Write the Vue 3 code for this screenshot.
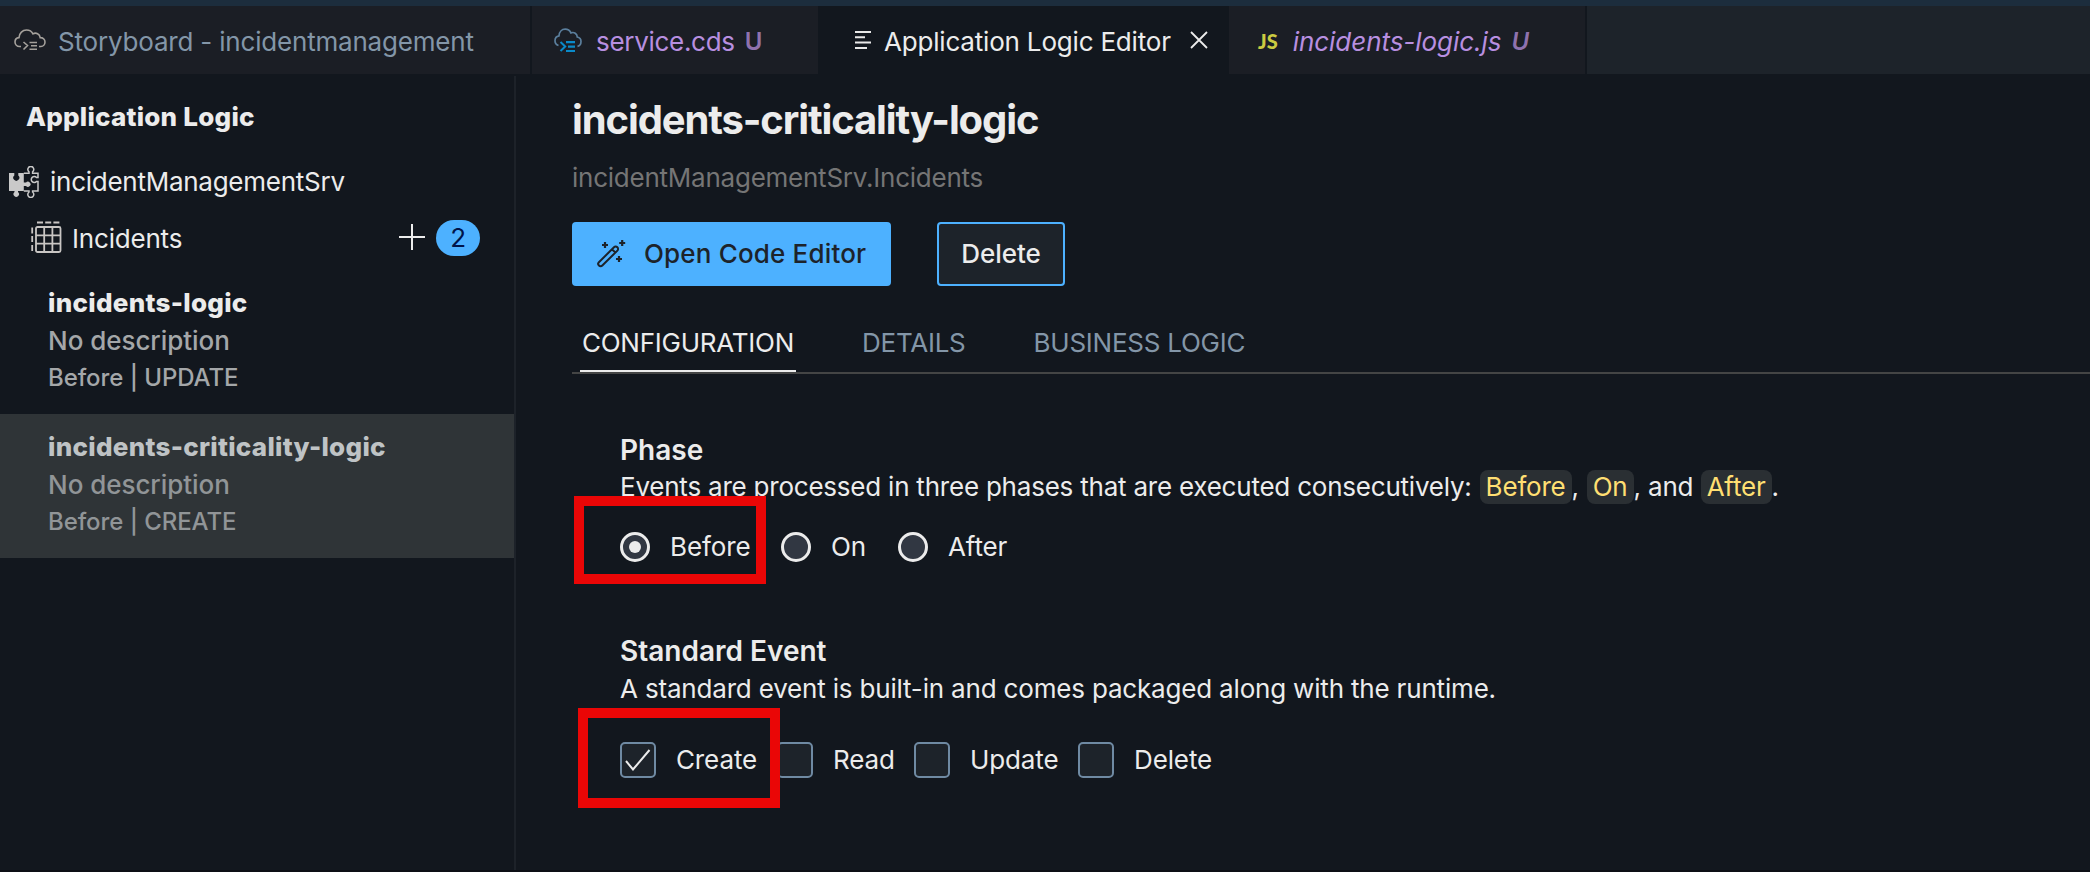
<script setup>
const handlers = [
  { name: 'incidents-logic', desc: 'No description', meta: 'Before | UPDATE', selected: false },
  { name: 'incidents-criticality-logic', desc: 'No description', meta: 'Before | CREATE', selected: true },
]
const phases = [
  { label: 'Before', checked: true, cls: 'r1' },
  { label: 'On', checked: false, cls: 'r2' },
  { label: 'After', checked: false, cls: 'r3' },
]
const events = [
  { label: 'Create', checked: true, cls: 'c1' },
  { label: 'Read', checked: false, cls: 'c2' },
  { label: 'Update', checked: false, cls: 'c3' },
  { label: 'Delete', checked: false, cls: 'c4' },
]
</script>

<template>
  <div class="app">
    <header class="tabs">
      <div class="tab t1">
        <svg class="cloud" width="32" height="22" viewBox="0 0 32 22" fill="none" stroke="#a5a19c" stroke-width="1.6">
          <path d="M7 17.5H5.5A4.6 4.6 0 0 1 1 13C1 10.300 3 8.800 5 8.600C5.300 4 8.500 1 12.500 1C15.500 1 17.800 2.500 19 4.900C22 3 25.800 5 26.200 8.600C29 8.600 31 10.500 31 13C31 15.800 29 17.500 27 17.500H25" />
          <path d="M9.500 13L13.500 16.500L9.500 20.500M15.500 13.500H23M17 16.800H23M15.500 20.200H23" />
        </svg>
        <span class="s-story">Storyboard - incidentmanagement</span>
      </div>
      <div class="tab t2">
        <svg class="cds" width="28" height="25" viewBox="0 0 28 25" fill="none">
          <path d="M4.500 17.500C2.200 16.700 1 14.700 1 12.700C1 10 2.800 8.200 5 7.800C5.200 3.800 7.800 1.200 11.200 1.200C13.800 1.200 15.800 2.600 16.900 4.900C20.200 3.600 23 5.800 23.300 9C25.600 9.500 27 11.400 27 13.500C27 16 25.500 17.900 23.500 18.300" stroke="#5b7f9d" stroke-width="1.700" />
          <path d="M6.500 14L11.200 18.500L6.500 23" stroke="#0a8ac9" stroke-width="2" />
          <path d="M12 14.200H21M14 18.600H21M12 23H21" stroke="#0a8ac9" stroke-width="2.200" />
        </svg>
        <span class="s-cds">service.cds</span>
        <span class="u">U</span>
      </div>
      <div class="tab t3 active">
        <svg class="lines" width="17" height="18" viewBox="0 0 17 18" stroke="#e8e8e8" stroke-width="2">
          <path d="M0 1H16M0 6.300H10M0 11.500H16M0 17H12" />
        </svg>
        <span class="s-ale">Application Logic Editor</span>
        <svg class="close" width="18" height="18" viewBox="0 0 18 18" stroke="#ececec" stroke-width="1.800">
          <path d="M1 1L17 17M17 1L1 17" />
        </svg>
      </div>
      <div class="tab t4">
        <span class="js">JS</span>
        <span class="s-file">incidents-logic.js</span>
        <span class="u ui">U</span>
      </div>
    </header>

    <div class="body">
      <aside class="side">
        <h2 class="side-title">Application Logic</h2>
        <div class="row srv">
          <svg width="32" height="32" viewBox="0 0 32 32" fill="none" stroke="#c9c9c9" stroke-width="1.500">
            <path d="M1 7H6.300V9.500A3 3 0 1 0 10.300 9.500V7H15.800V16.500H18A2.600 2.600 0 1 1 18 20H15.800V25H10V26A2.700 2.700 0 1 1 6.500 26V25H1Z" fill="#c9c9c9" stroke="none" />
            <path d="M15.800 7.200H21V5.800A3 3 0 1 1 24.600 5.800V7.200H30V11.500H28.500A3 3 0 1 0 28.500 15.500H30V25H24.600V26A3 3 0 1 1 21 26V25H15.800" />
          </svg>
          <span class="s-srv">incidentManagementSrv</span>
        </div>
        <div class="row ent">
          <svg class="grid" width="31" height="32" viewBox="0 0 31 32" fill="none" stroke="#c9c6c4" stroke-width="1.800">
            <rect x="5" y="6" width="24.500" height="25" rx="1.500" />
            <path d="M13.200 6V31M21.400 6V31M5 14.300H29.500M5 22.700H29.500" />
            <path d="M6 1.500H12M14.200 1.500H20.200M22.400 1.500H28.400M1.200 6.500V12.500M1.200 15V21M1.200 24V30" />
          </svg>
          <span class="s-inc">Incidents</span>
          <svg class="plus" width="28" height="28" viewBox="0 0 28 28" stroke="#ececec" stroke-width="2">
            <path d="M14 1V27M1 14H27" />
          </svg>
          <span class="badge">2</span>
        </div>
        <div v-for="h in handlers" :key="h.name" class="handler" :class="{ selected: h.selected }">
          <b>{{ h.name }}</b>
          <span class="desc">{{ h.desc }}</span>
          <span class="meta">{{ h.meta }}</span>
        </div>
      </aside>

      <main class="main">
        <h1>incidents-criticality-logic</h1>
        <p class="sub">incidentManagementSrv.Incidents</p>
        <div class="actions">
          <button class="primary">
            <svg width="30" height="28" viewBox="0 0 30 28" fill="none" stroke="#1d232a" stroke-width="2">
              <path d="M1.900 22.200L17 7.300A2.350 2.350 0 0 1 20.400 10.600L5.300 25.500A2.350 2.350 0 0 1 1.900 22.200ZM15.200 9.500L18.300 12.500" />
              <path d="M8 2V8M5 5H11M25.200 0V6M22.200 3H28.200M22 16V22M19 19H25" stroke-width="2.200" />
            </svg>
            <span>Open Code Editor</span>
          </button>
          <button class="secondary"><span>Delete</span></button>
        </div>
        <nav class="nav">
          <span class="n1">CONFIGURATION</span>
          <span class="n2">DETAILS</span>
          <span class="n3">BUSINESS LOGIC</span>
        </nav>

        <section class="sec phase">
          <h3 class="s-phase">Phase</h3>
          <p class="text"><span class="s-ev">Events are processed in three phases that are executed consecutively:</span><code class="k1">Before</code><span class="comma">,</span><code class="k2">On</code><span class="and">, and</span><code class="k3">After</code><span>.</span></p>
          <div class="opts radios">
            <label v-for="p in phases" :key="p.label" :class="p.cls">
              <i class="radio"><i v-if="p.checked" class="dot"></i></i>{{ p.label }}
            </label>
            <div class="mark m1"></div>
          </div>
        </section>

        <section class="sec event">
          <h3 class="s-std">Standard Event</h3>
          <p class="text s-stdtext">A standard event is built-in and comes packaged along with the runtime.</p>
          <div class="opts checks">
            <label v-for="e in events" :key="e.label" :class="e.cls">
              <i class="box">
                <svg v-if="e.checked" width="26" height="22" viewBox="0 0 26 22" fill="none" stroke="#ececec" stroke-width="2">
                  <path d="M1 12L8 20.500L24.500 1" />
                </svg>
              </i>{{ e.label }}
            </label>
            <div class="mark m2"></div>
          </div>
        </section>
      </main>
    </div>
  </div>
</template>

<style>
body { margin: 0; background: #12171e; }
</style>

<style scoped>
.app { box-sizing: border-box; width: 2090px; height: 872px; overflow: hidden; display: flex; flex-direction: column; background: #12171e; border-top: 6px solid #1c2d3d; border-bottom: 2px solid #0d0f15; color: #ececec; font: 400 26px/32px Inter, "Liberation Sans", sans-serif; letter-spacing: -0.19px; white-space: nowrap; }
h1, h2, h3, p { margin: 0; }
.app span { flex: none; }
svg { flex: none; display: block; }

.tabs { display: flex; height: 68px; background: #1d232a; flex: none; }
.tab { box-sizing: border-box; display: flex; align-items: center; height: 68px; background: #1b1e25; }
.tab span { padding-top: 3px; }
.t1 { width: 532px; padding-left: 14px; border-right: 2px solid #12171e; color: #8396a8; }
.t2 { width: 286px; padding-left: 22px; color: #b88fe0; }
.t3 { width: 411px; padding-left: 37px; background: #12171e; color: #ececec; }
.t4 { width: 358px; padding-left: 29px; border-right: 2px solid #12171e; color: #b88fe0; }
.cloud { margin-right: 12px; }
.cds { margin: 0 14px 0 0; }
.s-cds { letter-spacing: -0.3px; }
.u { font-size: 24px; font-weight: 600; color: #8f72ae; margin-left: 10px; }
.lines { margin: 0 12px 0 0; }
.close { margin-left: 19px; }
.tab .js { font: 900 20px/32px Lato, sans-serif; color: #cbcb41; margin-right: 15px; padding-top: 1px; letter-spacing: 0; }
.s-file, .ui { font-style: italic; }
.s-file { letter-spacing: -0.05px; }

.body { display: flex; flex: 1; }
.side { box-sizing: border-box; width: 516px; margin-top: 2px; border-right: 2px solid #1d2229; padding-top: 25px; }
.side-title { font-size: 26px; font-weight: 800; line-height: 32px; padding-left: 26px; letter-spacing: 0.23px; }
.row { display: flex; align-items: center; height: 57px; }
.srv { margin-top: 20px; padding-left: 8px; }
.s-srv { margin-left: 10px; letter-spacing: -0.26px; }
.ent { padding-left: 31px; margin-bottom: 3px; }
.grid, .plus { margin-bottom: 3px; }
.s-inc { margin-left: 10px; width: 326px; }
.app .badge { display: block; width: 44px; height: 36px; line-height: 36px; border-radius: 18px; margin: 0 0 2px 10px; background: #4db1ff; color: #00144a; text-align: center; }
.handler { box-sizing: border-box; height: 144px; padding: 17px 0 0 48px; display: flex; flex-direction: column; }
.handler b { font-weight: 800; line-height: 32px; height: 38px; letter-spacing: 0.29px; }
.desc { height: 37px; color: #a4a7a9; font-weight: 450; letter-spacing: -0.04px; }
.meta { font-size: 24px; color: #a4a7a9; font-weight: 450; letter-spacing: -0.07px; }
.selected { background: #2f3437; color: #bfc3c5; }
.selected .desc, .selected .meta { color: #919597; }

.main { flex: 1; padding: 21px 0 0 56px; display: flex; flex-direction: column; }
h1 { font-size: 40px; font-weight: 700; line-height: 50px; letter-spacing: -1.12px; }
.sub { color: #757575; margin-top: 17px; letter-spacing: -0.24px; }
.actions { display: flex; margin-top: 28px; }
button { box-sizing: border-box; height: 64px; display: flex; align-items: center; border-radius: 4px; font: inherit; padding: 0; letter-spacing: 0; }
.primary { width: 319px; background: #4db1ff; border: 0; color: #1d232a; font-weight: 540; padding-left: 25px; letter-spacing: 0.17px; }
.primary span { margin-left: 17px; }
.secondary { width: 128px; margin-left: 46px; border: 2px solid #4db1ff; background: #1d232a; color: #ececec; font-weight: 500; justify-content: center; }
.nav { display: flex; height: 86px; border-bottom: 2px solid #444545; color: #8396a8; letter-spacing: -0.25px; }
.nav span { box-sizing: border-box; height: 86px; padding-top: 41px; }
.n1 { margin-left: 8px; width: 216px; text-align: center; color: #ececec; border-bottom: 2px solid #ececec; }
.n2 { margin-left: 66px; }
.n3 { margin-left: 68px; }

.sec { padding-left: 48px; display: flex; flex-direction: column; }
.phase { margin-top: 59px; }
h3 { font-size: 28px; font-weight: 600; line-height: 34px; letter-spacing: 0; }
.text { display: flex; line-height: 34px; margin-top: 3px; }
.s-ev { letter-spacing: -0.22px; }
.s-stdtext { margin-top: 4px; letter-spacing: -0.18px; }
code { font: inherit; flex: none; box-sizing: border-box; height: 34px; border-radius: 8px; background: #2a2f33; color: #ffdf72; text-align: center; }
.k1 { width: 92px; margin-left: 8px; }
.k2 { width: 47px; }
.k3 { width: 71px; }
.app .comma { width: 15px; }
.app .and { width: 67px; }
.opts { position: relative; display: flex; letter-spacing: -0.12px; }
.radios { height: 30px; margin-top: 28px; }
label { display: flex; align-items: center; }
.radio { box-sizing: border-box; display: flex; align-items: center; justify-content: center; width: 30px; height: 30px; border: 3px solid #ececec; border-radius: 50%; background: #313742; margin-right: 20px; }
.dot { width: 12px; height: 12px; border-radius: 50%; background: #ececec; }
.r1 { width: 161px; }
.r2 { width: 117px; }
.event { margin-top: 72px; }
.checks { height: 36px; margin-top: 36px; }
.box { box-sizing: border-box; display: flex; align-items: center; justify-content: center; width: 36px; height: 36px; border: 2px solid #6f8aa3; border-radius: 5px; background: #1d232a; margin-right: 20px; }
.c1 { width: 157px; }
.c2 { width: 137px; }
.c3 { width: 164px; }
.mark { position: absolute; box-sizing: border-box; border: 10px solid #ea0606; }
.m1 { left: -46px; top: -36px; width: 192px; height: 88px; }
.m2 { left: -42px; top: -34px; width: 202px; height: 100px; }
</style>
